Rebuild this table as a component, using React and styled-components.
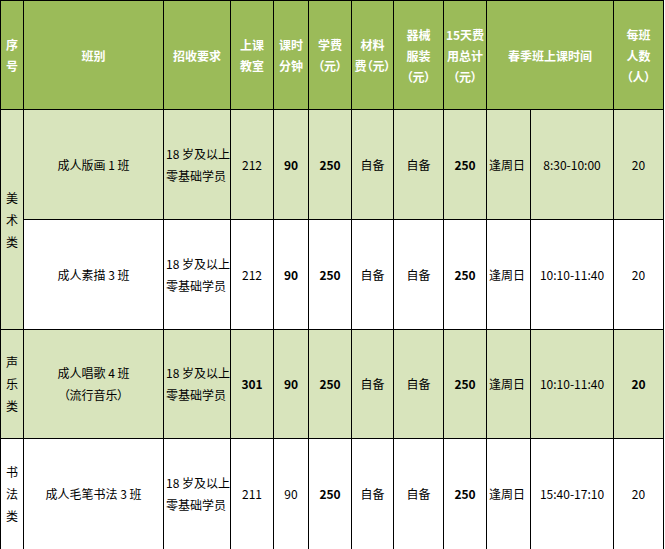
import React from 'react';
import styled, { createGlobalStyle } from 'styled-components';

const GlobalStyle = createGlobalStyle`
  html, body {
    margin: 0;
    padding: 0;
    background: #fff;
  }
`;

const Sheet = styled.div`
  width: 665px;
  height: 549px;
  overflow: hidden;
`;

const Table = styled.table`
  border-collapse: collapse;
  table-layout: fixed;
  width: 664px;
  font-family: "Noto Sans CJK SC", "DejaVu Sans", sans-serif;
  font-size: 12px;
  font-feature-settings: "palt";
  color: #000;
`;

const Row = styled.tr`
  height: ${p => p.$h}px;
`;

const HeadCell = styled.th`
  background: #9bbb59;
  color: #fff;
  font-weight: bold;
  border: 1px solid #000;
  padding: 0;
  line-height: 21px;
  text-align: center;
  vertical-align: middle;
  white-space: nowrap;
  overflow: hidden;
`;

const Cell = styled.td`
  background: ${p => (p.$shade ? '#d8e4bc' : '#fff')};
  border: 1px solid #000;
  padding: ${p => (p.$align === 'left' ? '0 0 0 2px' : '0')};
  line-height: 22px;
  text-align: ${p => p.$align || 'center'};
  vertical-align: middle;
  font-weight: ${p => (p.$bold ? 'bold' : 'normal')};
  white-space: nowrap;
  overflow: hidden;
`;

const widths = [23, 140, 67, 43, 35, 43, 42, 50, 43, 44, 83, 50];

const rows = [
  {
    h: 110, shade: true, cat: ['美', '术', '类'], catSpan: 2, catShade: true,
    name: ['成人版画 1 班'], room: '212', roomBold: false, mins: '90', minsBold: true,
    time: '8:30-10:00', count: '20', countBold: false,
  },
  {
    h: 110, shade: false, name: ['成人素描 3 班'], room: '212', roomBold: false,
    mins: '90', minsBold: true, time: '10:10-11:40', count: '20', countBold: false,
  },
  {
    h: 109, shade: true, cat: ['声', '乐', '类'], catSpan: 1, catShade: true,
    name: ['成人唱歌 4 班', '（流行音乐）'], room: '301', roomBold: true,
    mins: '90', minsBold: true, time: '10:10-11:40', count: '20', countBold: true,
  },
  {
    h: 111, shade: false, cat: ['书', '法', '类'], catSpan: 1, catShade: false,
    name: ['成人毛笔书法 3 班'], room: '211', roomBold: false,
    mins: '90', minsBold: false, time: '15:40-17:10', count: '20', countBold: false,
  },
];

const Lines = ({ items }) =>
  items.map((t, i) => (
    <React.Fragment key={i}>
      {i > 0 && <br />}
      {t}
    </React.Fragment>
  ));

export default function App() {
  return (
    <Sheet>
      <GlobalStyle />
      <Table>
        <colgroup>
          {widths.map((w, i) => (
            <col key={i} style={{ width: w }} />
          ))}
        </colgroup>
        <thead>
          <Row $h={109}>
            <HeadCell><Lines items={['序', '号']} /></HeadCell>
            <HeadCell>班别</HeadCell>
            <HeadCell>招收要求</HeadCell>
            <HeadCell><Lines items={['上课', '教室']} /></HeadCell>
            <HeadCell><Lines items={['课时', '分钟']} /></HeadCell>
            <HeadCell><Lines items={['学费', '（元）']} /></HeadCell>
            <HeadCell><Lines items={['材料', '费（元）']} /></HeadCell>
            <HeadCell><Lines items={['器械', '服装', '（元）']} /></HeadCell>
            <HeadCell><Lines items={['15天费', '用总计', '（元）']} /></HeadCell>
            <HeadCell colSpan={2}>春季班上课时间</HeadCell>
            <HeadCell><Lines items={['每班', '人数', '（人）']} /></HeadCell>
          </Row>
        </thead>
        <tbody>
          {rows.map((r, i) => (
            <Row key={i} $h={r.h}>
              {r.cat && (
                <Cell rowSpan={r.catSpan} $shade={r.catShade}>
                  <Lines items={r.cat} />
                </Cell>
              )}
              <Cell $shade={r.shade}><Lines items={r.name} /></Cell>
              <Cell $shade={r.shade} $align="left">
                <Lines items={['18 岁及以上', '零基础学员']} />
              </Cell>
              <Cell $shade={r.shade} $bold={r.roomBold}>{r.room}</Cell>
              <Cell $shade={r.shade} $bold={r.minsBold}>{r.mins}</Cell>
              <Cell $shade={r.shade} $bold>250</Cell>
              <Cell $shade={r.shade}>自备</Cell>
              <Cell $shade={r.shade}>自备</Cell>
              <Cell $shade={r.shade} $bold>250</Cell>
              <Cell $shade={r.shade} $align="left">逢周日</Cell>
              <Cell $shade={r.shade}>{r.time}</Cell>
              <Cell $shade={r.shade} $bold={r.countBold}>{r.count}</Cell>
            </Row>
          ))}
          <Row $h={110}>
            {widths.map((w, i) => (
              <Cell key={i} $shade />
            ))}
          </Row>
        </tbody>
      </Table>
    </Sheet>
  );
}
